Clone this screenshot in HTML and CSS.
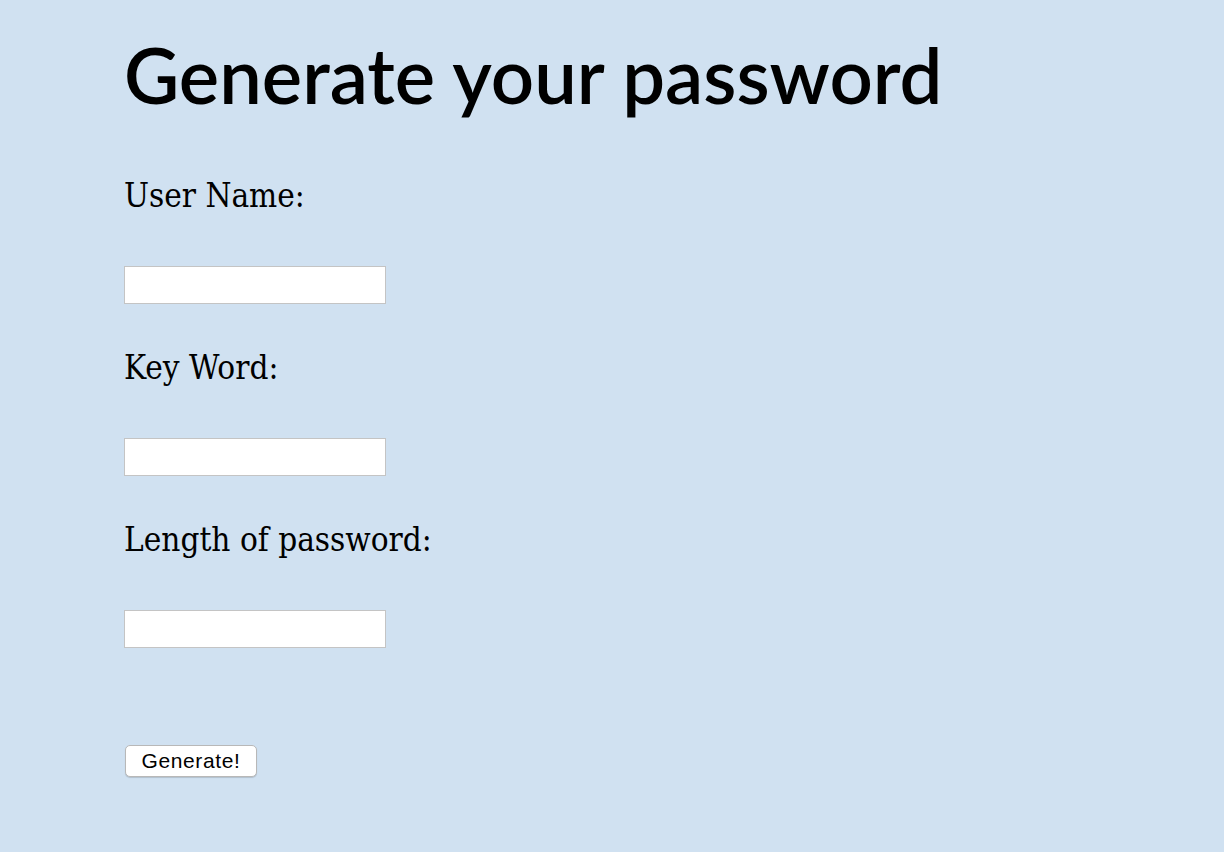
FILE: index.html
```html
<!DOCTYPE html>
<html>
<head>
<meta charset="utf-8">
<link rel="stylesheet" href="styles.css">
</head>
<body>
<main class="page">
  <h1 class="title">Generate your password</h1>
  <form class="form">
    <label class="field-label" for="user">User Name:</label>
    <input class="field-input" id="user" type="text">
    <label class="field-label" for="key">Key Word:</label>
    <input class="field-input" id="key" type="text">
    <label class="field-label" for="len">Length of password:</label>
    <input class="field-input" id="len" type="text">
    <button class="btn" type="button">Generate!</button>
  </form>
</main>
</body>
</html>
```

FILE: styles.css
```css
html, body {
  margin: 0;
  padding: 0;
  background: #d0e1f1;
  height: 100%;
}
.page {
  padding: 27px 0 0 124px;
}
.title {
  font-family: Lato, sans-serif;
  font-weight: 600;
  font-size: 76px;
  line-height: 96px;
  margin: 0;
  color: #000;
}
.form {
  display: flex;
  flex-direction: column;
  align-items: flex-start;
  margin-top: 51px;
}
.field-label {
  font-family: "DejaVu Serif Condensed", "DejaVu Serif", serif;
  font-size: 33px;
  line-height: 44px;
  color: #000;
}
.field-input {
  box-sizing: border-box;
  width: 262px;
  height: 38px;
  margin: 48px 0 42px 0;
  border: 1px solid #c4c4c4;
  background: #fff;
  padding: 2px 4px;
}
.btn {
  margin-top: 55px;
  margin-left: 1px;
  width: 132px;
  height: 32px;
  background: #fff;
  border: 1px solid #b8b8b8;
  border-radius: 5px;
  box-shadow: 0 1px 1px rgba(0,0,0,0.15);
  font-family: "Liberation Sans", Arial, sans-serif;
  font-size: 21px;
  letter-spacing: 0.6px;
  color: #000;
  padding: 0;
}
```
